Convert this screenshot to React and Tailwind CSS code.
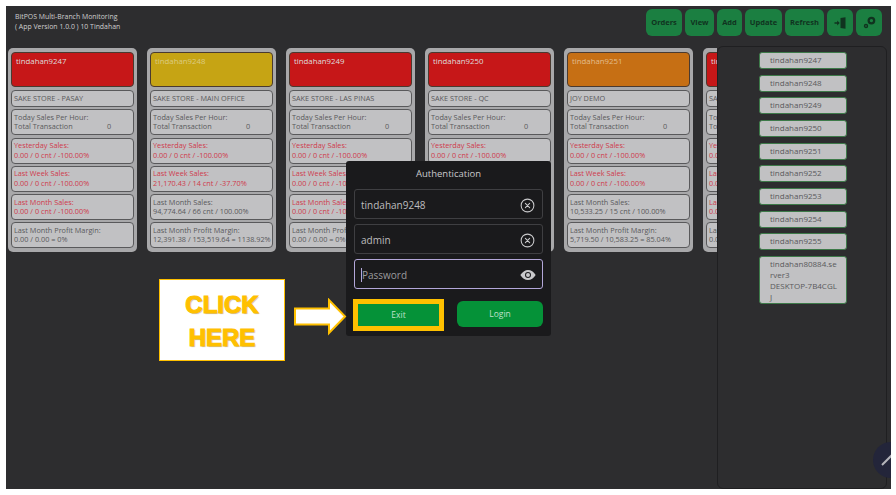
import React from "react";
import { IoCloseCircleOutline, IoEye } from "react-icons/io5";

const RED = "bg-[#c61718] text-[#ddd]";
const YELLOW = "bg-[#c6a414] text-[#dccb80]";
const ORANGE = "bg-[#c66f14] text-[#e2bd8e]";

const zero = "0.00 / 0 cnt / -100.00%";

const stores = [
  { id: "tindahan9247", color: RED, name: "SAKE STORE - PASAY", yesterday: zero, week: zero, month: zero, monthBad: true, margin: "0.00 / 0.00 = 0%" },
  { id: "tindahan9248", color: YELLOW, name: "SAKE STORE - MAIN OFFICE", yesterday: zero, week: "21,170.43 / 14 cnt / -37.70%", month: "94,774.64 / 66 cnt / 100.00%", monthBad: false, margin: "12,391.38 / 153,519.64 = 1138.92%" },
  { id: "tindahan9249", color: RED, name: "SAKE STORE - LAS PINAS", yesterday: zero, week: zero, month: zero, monthBad: true, margin: "0.00 / 0.00 = 0%" },
  { id: "tindahan9250", color: RED, name: "SAKE STORE - QC", yesterday: zero, week: zero, month: zero, monthBad: true, margin: "0.00 / 0.00 = 0%" },
  { id: "tindahan9251", color: ORANGE, name: "JOY DEMO", yesterday: zero, week: zero, month: "10,533.25 / 15 cnt / 100.00%", monthBad: false, margin: "5,719.50 / 10,583.25 = 85.04%" },
  { id: "tindahan9252", color: RED, name: "SAKE STORE", yesterday: zero, week: zero, month: zero, monthBad: true, margin: "0.00 / 0.00 = 0%" },
];

const branchList = [
  "tindahan9247",
  "tindahan9248",
  "tindahan9249",
  "tindahan9250",
  "tindahan9251",
  "tindahan9252",
  "tindahan9253",
  "tindahan9254",
  "tindahan9255",
];

const HeaderButton = ({ children, className }) => (
  <button className={`h-[27px] rounded-[6px] bg-[#1b7f41] text-[7.5px] font-bold text-[#10331f] flex items-center justify-center ${className}`}>
    {children}
  </button>
);

const Row = ({ title, value, bad, extra, h = "h-[26px]" }) => (
  <div className={`${h} shrink-0 rounded-[4px] border-[1.5px] border-[#59595b] bg-[#c1c1c3] px-[2px] flex flex-col justify-center leading-[9.5px] whitespace-nowrap overflow-hidden ${bad ? "text-[#cf3a4c]" : "text-[#59595b]"}`}>
    <div>{title}</div>
    {value && (
      <div className="flex">
        <span className="w-[93px] shrink-0">{value}</span>
        {extra && <span>{extra}</span>}
      </div>
    )}
  </div>
);

const StoreCard = ({ store }) => (
  <div className="w-[129px] shrink-0 h-[204px] rounded-[5px] bg-[#a8a8aa] px-[3px] pt-[4px] flex flex-col gap-[2.25px] text-[7.3px]">
    <div className={`${store.color} h-[35px] shrink-0 mb-[0.75px] rounded-[4px] border border-[#4a3a30] px-[4px] pt-[2px] text-[7.8px] leading-[13px]`}>
      {store.id}
    </div>
    <Row title={store.name} h="h-[17px]" />
    <Row title="Today Sales Per Hour:" value="Total Transaction" extra="0" />
    <Row title="Yesterday Sales:" value={store.yesterday} bad />
    <Row title="Last Week Sales:" value={store.week} bad />
    <Row title="Last Month Sales:" value={store.month} bad={store.monthBad} />
    <Row title="Last Month Profit Margin:" value={store.margin} />
  </div>
);

const ModalInput = ({ value, icon, active, placeholder }) => (
  <div className={`h-[30px] rounded-[3px] border flex items-center pl-[6px] pr-[6px] pt-[2px] text-[10px] ${active ? "border-[#b3a7d9]" : "border-[#3f3f42]"} ${placeholder ? "text-[#9a9a9c]" : "text-[#bdbdbf]"}`}>
    {active && <span className="w-px h-[14px] bg-[#b3a7d9]" />}
    <span className="flex-1 mt-[1px]">{value}</span>
    {icon}
  </div>
);

export default function App() {
  return (
    <div className="w-[896px] h-[495px] bg-white pt-[6px] pl-[6px] pr-[5px] pb-[6px] overflow-hidden font-['Open_Sans',sans-serif]">
      <div className="relative w-full h-full bg-[#2d2d2f] overflow-hidden flex flex-col">
        {/* top bar */}
        <div className="h-[40px] shrink-0 flex justify-between pl-[9px] pr-[9px] pt-[3px]">
          <div className="pt-[3px] text-[6.9px] leading-[9.5px] text-[#cfcfcf]">
            <div>BitPOS Multi-Branch Monitoring</div>
            <div>( App Version 1.0.0 ) 10 Tindahan</div>
          </div>
          <div className="flex gap-[3px]">
            <HeaderButton className="w-[36px]">Orders</HeaderButton>
            <HeaderButton className="w-[29px]">View</HeaderButton>
            <HeaderButton className="w-[25px]">Add</HeaderButton>
            <HeaderButton className="w-[37px]">Update</HeaderButton>
            <HeaderButton className="w-[39px]">Refresh</HeaderButton>
            <HeaderButton className="w-[26px]">
              <svg width="12" height="12" viewBox="0 0 12 12" fill="#10331f">
                <path d="M6.5 1 L11.5 0.2 V11.8 L6.5 11 Z" />
                <path d="M0.5 5.2 H3.2 V3.5 L5.7 6 L3.2 8.5 V6.8 H0.5 Z" />
              </svg>
            </HeaderButton>
            <HeaderButton className="w-[26px]">
              <svg width="13" height="13" viewBox="0 0 13 13" fill="none" stroke="#10331f">
                <circle cx="8.4" cy="4.6" r="2.8" strokeWidth="2.2" />
                <circle cx="3" cy="10" r="1.5" strokeWidth="1.4" />
              </svg>
            </HeaderButton>
          </div>
        </div>

        {/* cards + branch list */}
        <div className="flex-1 flex min-h-0">
          <div className="w-[711px] shrink-0 overflow-hidden flex gap-[10px] pl-[2px] pt-[2px] items-start">
            {stores.map((store) => (
              <StoreCard key={store.id} store={store} />
            ))}
          </div>
          <div className="w-[170px] shrink-0 rounded-[6px] border border-[#1f1f21] flex flex-col items-center gap-[5.67px] pt-[5px] pl-[2px] text-[8px] text-[#59595b]">
            {branchList.map((b) => (
              <div key={b} className="w-[88px] h-[17px] shrink-0 rounded-[3px] border-[1.5px] border-[#3d7a49] bg-[#c1c1c3] pl-[10px] leading-[14px]">
                {b}
              </div>
            ))}
            <div className="w-[88px] rounded-[3px] border-[1.5px] border-[#3d7a49] bg-[#c1c1c3] pl-[10px] pr-[9px] py-[1px] leading-[11px] break-all">
              tindahan80884.server3
              <br />
              DESKTOP-7B4CGLJ
            </div>
          </div>
        </div>

        {/* floating edit button */}
        <div className="absolute left-[867px] top-[436px] w-[36px] h-[36px] rounded-full bg-[#23253a] flex items-center justify-start pl-[8px]">
          <svg width="12" height="12" viewBox="0 0 12 12" stroke="#b5b5bb" strokeWidth="2">
            <path d="M1 11 L11 1" />
          </svg>
        </div>

        {/* auth dialog */}
        <div className="absolute left-[340px] top-[155px] w-[205px] h-[175px] rounded-[3px] bg-[#1a1a1c] px-[8px] text-[#c9c9cb]">
          <div className="h-[28px] pt-[6px] text-center text-[9.5px] leading-[14px]">Authentication</div>
          <div className="flex flex-col gap-[5px]">
            <ModalInput value="tindahan9248" icon={<IoCloseCircleOutline className="text-[17px] text-[#c9c9cb]" />} />
            <ModalInput value="admin" icon={<IoCloseCircleOutline className="text-[17px] text-[#c9c9cb]" />} />
            <ModalInput value="Password" placeholder active icon={<IoEye className="text-[16px] text-[#c9c9cb]" />} />
          </div>
          <div className="mt-[10px] flex justify-between items-start text-[8.5px] text-[#bfe0cb]">
            <button className="-ml-[1px] w-[91px] h-[32px] bg-[#059238] border-[5px] border-[#ffc000]">Exit</button>
            <button className="mt-[2px] w-[86px] h-[26px] rounded-[6px] bg-[#059238]">Login</button>
          </div>
        </div>

        {/* click here callout */}
        <div className="absolute left-[153px] top-[273px] w-[126px] h-[82px] border border-[#ffc000] bg-white pt-[2px] flex flex-col items-center justify-center text-[24px] font-bold leading-[33px] font-['Liberation_Sans',sans-serif] text-[#ffc000] [-webkit-text-stroke:1.2px_#ffc000] [text-shadow:1px_1px_1px_#b5b5b5]">
          <div>CLICK</div>
          <div>HERE</div>
        </div>
        <svg className="absolute left-[287px] top-[292px]" width="54" height="38" viewBox="0 0 54 38">
          <path d="M2 10.5 H36 V2 L52 18.5 L36 35 V26.5 H2 Z" fill="#fff" stroke="#ffc000" strokeWidth="2" />
        </svg>
      </div>
    </div>
  );
}
